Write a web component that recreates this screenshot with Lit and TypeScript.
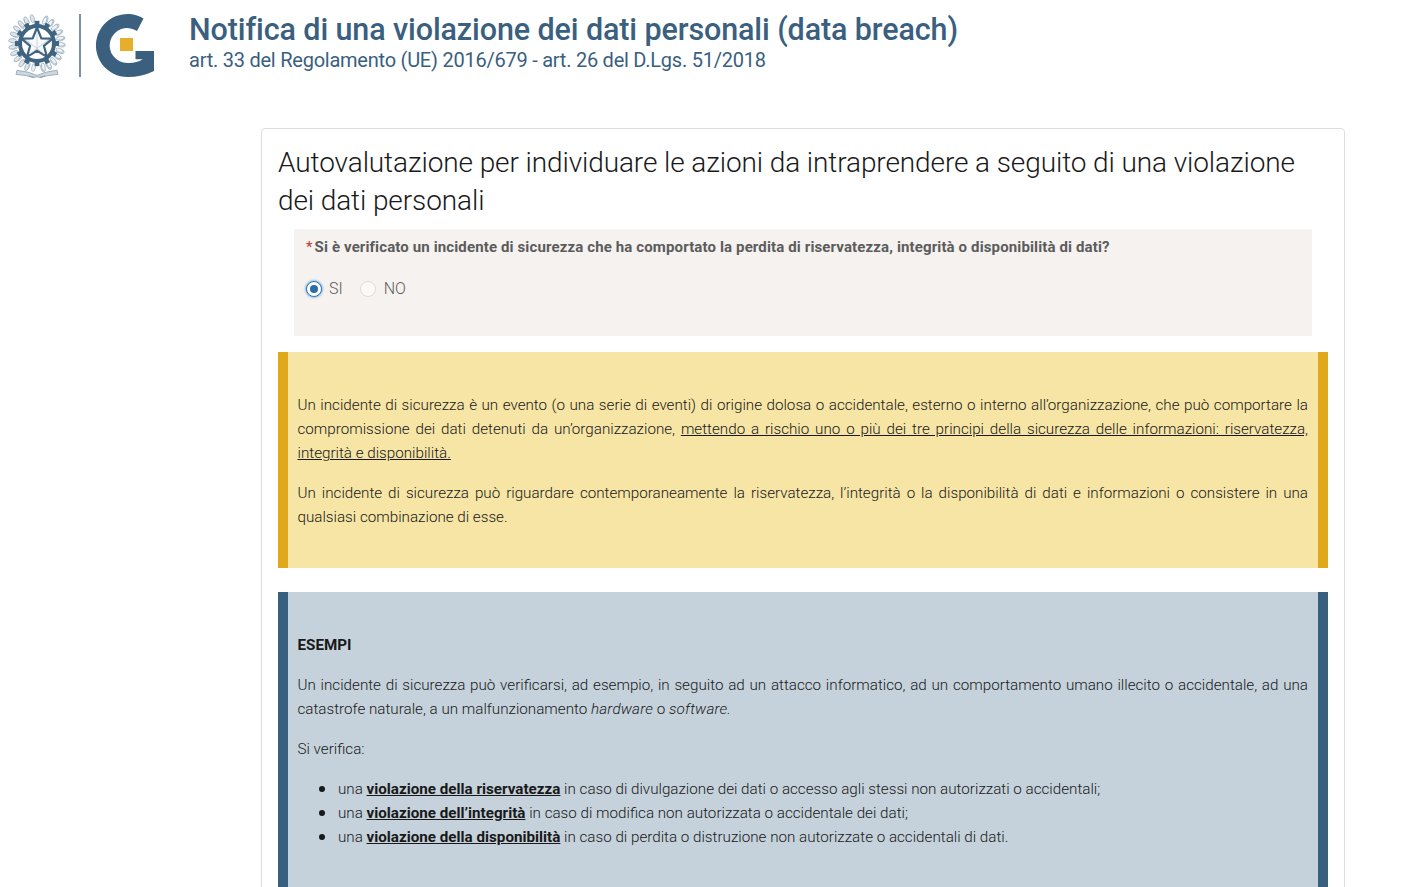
import { LitElement, html, css, svg } from "lit";
import { customElement } from "lit/decorators.js";

const laurel = () => {
  const leaves = [];
  for (let i = 0; i < 11; i++) {
    const a = 16 + i * 14.500;
    for (const s of [1, -1]) {
      leaves.push(svg`<ellipse cx="2.200" cy="-24.500" rx="1.900" ry="4" transform="rotate(${s * a})" fill="#dfe6eb" stroke="#9aaebd" stroke-width=".7"/>`);
      leaves.push(svg`<ellipse cx="-1.500" cy="-23.500" rx="1.800" ry="3.800" transform="rotate(${s * (a + 7)})" fill="#f1f4f6" stroke="#9aaebd" stroke-width=".7"/>`);
    }
  }
  return leaves;
};

const teeth = () => {
  const t = [];
  for (let i = 0; i < 12; i++) t.push(svg`<rect x="-2.400" y="-22" width="4.800" height="4" fill="#3f6482" transform="rotate(${i * 30})"/>`);
  return t;
};

@customElement("app-root")
export class AppRoot extends LitElement {
  static styles = css`
    :host { display: block; height: 887px; overflow: hidden; background: #fff; font-family: Roboto, sans-serif; color: #19191a; }
    .head { display: flex; align-items: flex-start; height: 128px; padding-left: 8px; box-sizing: border-box; }
    .logo { display: block; margin-top: 12px; flex: none; }
    .titles { margin-left: 31px; padding-top: 10px; color: #3a5f7f; }
    h1 { margin: 0; font: 500 30.5px/40px Roboto, sans-serif; letter-spacing: -0.115px; white-space: nowrap; }
    .sub { font: 400 20px/20px Roboto, sans-serif; letter-spacing: -0.24px; white-space: nowrap; }
    .card { margin-left: 261px; width: 1084px; box-sizing: border-box; border: 1px solid #ddd; border-radius: 4px; padding: 15px 16px 0; }
    h2 { margin: 0 0 9px; font: 300 28px/38px Roboto, sans-serif; color: #19191a; letter-spacing: -0.1px; }
    .q { margin: 0 16px; background: #f5f2ef; height: 107px; box-sizing: border-box; padding: 9px 12px; color: #5c5c5c; }
    .qt { font: 700 15px/18px Roboto, sans-serif; letter-spacing: 0.13px; }
    .qt i { font-style: normal; font-weight: 400; color: #c0392b; margin-right: 2px; }
    .opts { display: flex; align-items: center; margin-top: 23px; font: 300 16px/20px Roboto, sans-serif; }
    .r { width: 14px; height: 14px; border-radius: 50%; border: 1px solid #ddd; background: #fbfaf9; margin-right: 8px; display: flex; align-items: center; justify-content: center; }
    .r.on { border-color: #2f76b5; background: #fff; box-shadow: 0 0 2px 1px #8fbce6; margin-right: 7px; }
    .r.on::after { content: ""; width: 8px; height: 8px; border-radius: 50%; background: #2a6ca6; }
    .opt2 { margin-left: 17px; display: flex; align-items: center; }
    .box { margin-bottom: 24px; padding: 25px 10px 23px 9.500px; box-sizing: border-box; border-left: 10px solid; border-right: 10px solid; font: 300 15.200px/24px Roboto, sans-serif; }
    .y { margin-top: 16px; background: #f6e5a5; border-color: #dfa91b; }
    .b { background: #c5d2db; border-color: #395f7e; }
    p { margin: 16px 0; text-align: justify; }
    em { letter-spacing: 0.2px; }
    ul { margin: 16px 0; padding-left: 40.500px; list-style: none; }
    li::before { content: ""; display: inline-block; width: 6px; height: 6px; border-radius: 50%; background: #19191a; margin: 0 13px 2px -19px; vertical-align: middle; }
    b { font-weight: 700; }
    b.u, u { text-decoration: underline; }
  `;

  render() {
    return html`
      <div class="head">
        <svg class="logo" width="150" height="68" viewBox="8 12 150 68" xmlns="http://www.w3.org/2000/svg">
          <g transform="translate(37 43.500) scale(1 1.030)">
            ${laurel()}
            <path d="M-20 26 Q-9 27 0 31 Q9 27 20 26 L21 30 Q9 31 3 33 L8 31.500 Q2 34 0 32 Q-2 34 -8 31.500 L-3 33 Q-9 31 -21 30Z" fill="#cdd7e0" stroke="#8fa3b3" stroke-width=".8"/>
            <circle r="17" fill="#fff" stroke="#3f6482" stroke-width="4"/>
            ${teeth()}
            <path d="M0-15.500 4.300-5 15.500-4.800 6.900 2.200 10 13 0 7-10 13-6.900 2.200-15.500-4.800-4.300-5Z" fill="#f7f9fa" stroke="#3f6482" stroke-width="2.200" stroke-linejoin="round"/>
            <path d="M0-11V6M11-3.400-7 10M-11-3.400 7 10" stroke="#b9c6d1" stroke-width=".7" fill="none"/>
          </g>
          <rect x="79" y="14" width="2" height="63" fill="#7a90a3"/>
          <path d="M143.500 18.400A31.500 31.500 0 1 0 127.500 77Q142 77 154 71V51H135.500V59.300H142.700Q136 63.500 127.500 63A17.500 17.500 0 1 1 137 31Z" fill="#3a5f7f"/>
          <rect x="120" y="38" width="13" height="13" fill="#e7ae2b"/>
        </svg>
        <div class="titles">
          <h1>Notifica di una violazione dei dati personali (data breach)</h1>
          <div class="sub">art. 33 del Regolamento (UE) 2016/679 - art. 26 del D.Lgs. 51/2018</div>
        </div>
      </div>
      <div class="card">
        <h2>Autovalutazione per individuare le azioni da intraprendere a seguito di una violazione dei dati personali</h2>
        <div class="q">
          <div class="qt"><i>*</i>Si è verificato un incidente di sicurezza che ha comportato la perdita di riservatezza, integrità o disponibilità di dati?</div>
          <div class="opts">
            <span class="r on"></span>SI
            <span class="opt2"><span class="r"></span>NO</span>
          </div>
        </div>
        <div class="box y">
          <p>Un incidente di sicurezza è un evento (o una serie di eventi) di origine dolosa o accidentale, esterno o interno all’organizzazione, che può comportare la compromissione dei dati detenuti da un’organizzazione, <u>mettendo a rischio uno o più dei tre principi della sicurezza delle informazioni: riservatezza, integrità e disponibilità. </u></p>
          <p>Un incidente di sicurezza può riguardare contemporaneamente la riservatezza, l’integrità o la disponibilità di dati e informazioni o consistere in una qualsiasi combinazione di esse.</p>
        </div>
        <div class="box b">
          <p><b>ESEMPI</b></p>
          <p>Un incidente di sicurezza può verificarsi, ad esempio, in seguito ad un attacco informatico, ad un comportamento umano illecito o accidentale, ad una catastrofe naturale, a un malfunzionamento <em>hardware</em> o <em>software.</em></p>
          <p>Si verifica:</p>
          <ul>
            <li>una <b class="u">violazione della riservatezza</b> in caso di divulgazione dei dati o accesso agli stessi non autorizzati o accidentali;</li>
            <li>una <b class="u">violazione dell’integrità</b> in caso di modifica non autorizzata o accidentale dei dati;</li>
            <li>una <b class="u">violazione della disponibilità</b> in caso di perdita o distruzione non autorizzate o accidentali di dati.</li>
          </ul>
        </div>
      </div>
    `;
  }
}
